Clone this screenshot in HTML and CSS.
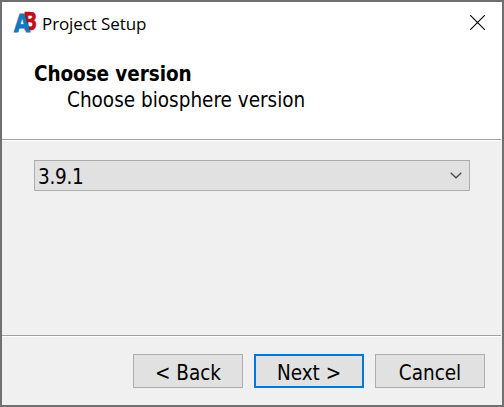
FILE: index.html
```html
<!DOCTYPE html>
<html lang="en">
<head>
<meta charset="utf-8">
<title>Project Setup</title>
<link rel="stylesheet" href="styles.css">
</head>
<body>
<div class="window">
  <header class="header">
    <div class="titlebar">
      <svg class="logo" width="25" height="24" viewBox="0 0 25 24">
        <text class="logo-b" x="10" y="18.6" textLength="14" lengthAdjust="spacingAndGlyphs">B</text>
        <text class="logo-a" x="1" y="21.4" textLength="16" lengthAdjust="spacingAndGlyphs">A</text>
      </svg>
      <span class="title">Project Setup</span>
      <svg class="close" width="15" height="15" viewBox="0 0 15 15"><path d="M0 0L15 15M15 0L0 15" fill="none" stroke="#000" stroke-width="1.1"/></svg>
    </div>
    <h1 class="heading">Choose version</h1>
    <p class="subheading">Choose biosphere version</p>
  </header>
  <main class="content">
    <div class="select">
      <span class="value">3.9.1</span>
      <svg width="12" height="7" viewBox="0 0 12 7"><path d="M.7.7L6 5.8L11.3.7" fill="none" stroke="#444" stroke-width="1.2"/></svg>
    </div>
  </main>
  <footer class="footer">
    <button class="button">&lt; Back</button>
    <button class="button primary">Next &gt;</button>
    <button class="button">Cancel</button>
  </footer>
</div>
</body>
</html>
```
FILE: styles.css
```css
* { box-sizing: border-box; }
body { margin: 0; }
.window {
  width: 504px;
  height: 407px;
  border: 2px solid #707070;
  background: #f0f0f0;
  color: #000;
  font: 20.5px/26px "DejaVu Sans Condensed", "DejaVu Sans", sans-serif;
  font-stretch: condensed;
  display: flex;
  flex-direction: column;
}
.header { height: 137px; background: #fff; flex: none; }
.titlebar { height: 41px; display: flex; align-items: center; padding: 0 17px 0 11px; }
.logo { font: bold 25px "Open Sans", sans-serif; overflow: visible; }
.logo-a { fill: #1478bf; stroke: #1478bf; stroke-width: .9px; }
.logo-b { fill: #c40d18; stroke: #c40d18; stroke-width: .6px; }
.title { margin: 2px 0 0 4px; font: 17px/24px "Open Sans", sans-serif; letter-spacing: -.1px; }
.close { margin-left: auto; }
.heading, .subheading { margin: 0; font-size: inherit; font-weight: normal; }
.heading { padding-left: 32px; margin-top: 18px; font-weight: bold; letter-spacing: -.08px; }
.subheading { padding-left: 65px; }
.content {
  height: 196px;
  flex: none;
  padding: 20px 31px 0 32px;
  border-top: 1px solid #a0a0a0;
  box-shadow: inset 0 1px #fff;
  margin-right: 1px;
}
.select {
  height: 31px;
  border: 1px solid #adadad;
  background: #e1e1e1;
  display: flex;
  align-items: center;
  justify-content: space-between;
  padding: 0 7px 0 3px;
}
.value { padding-top: 2px; letter-spacing: -.3px; }
.footer {
  flex: 1;
  border-top: 1px solid #a0a0a0;
  box-shadow: inset 0 1px #fff;
  margin-right: 1px;
  padding: 18px 16px 0;
  display: flex;
  justify-content: flex-end;
  gap: 11px;
}
.button {
  width: 110px;
  height: 34px;
  border: 1px solid #adadad;
  background: #e1e1e1;
  color: #000;
  font: inherit;
  padding: 4px 0 0;
}
.primary { border: 2px solid #0078d7; }
```
